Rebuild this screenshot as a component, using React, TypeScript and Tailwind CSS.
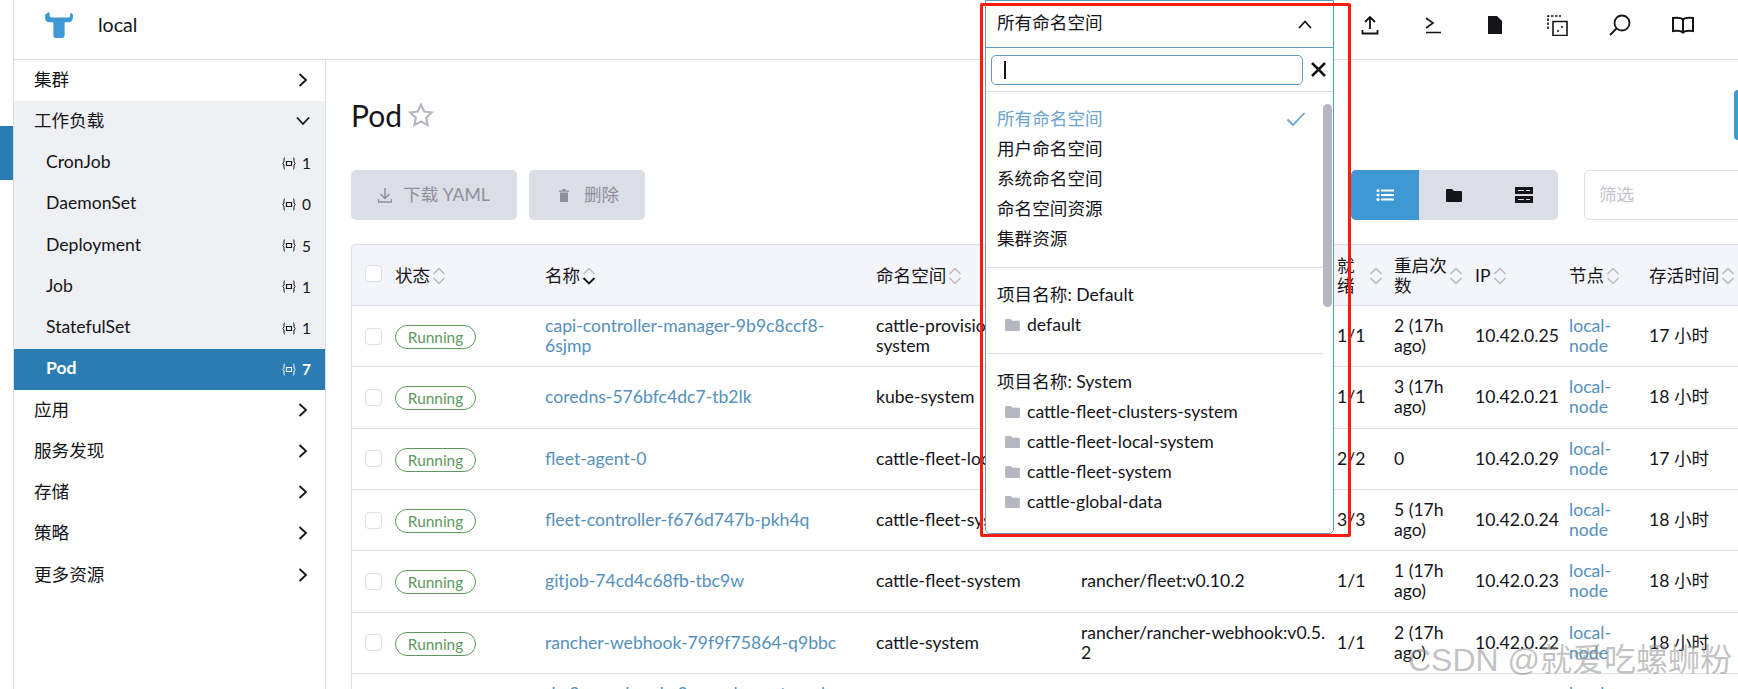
import React from "react";

const font = { fontFamily: '"Lato", "Noto Sans CJK SC", sans-serif' };

const Chevron = ({ down = false, up = false, className = "" }: { down?: boolean; up?: boolean; className?: string }) => (
  <svg width="14" height="14" viewBox="0 0 14 14" className={className} fill="none" stroke="#141419" strokeWidth="1.8">
    {down ? <path d="M1 3.500 7 10 13 3.500" /> : up ? <path d="M1 10 7 3.500 13 10" /> : <path d="M3.500 1 10 7 3.500 13" />}
  </svg>
);

const Sort = ({ active = false }: { active?: boolean }) => (
  <svg width="14" height="18" viewBox="0 0 14 18" fill="none" className="ml-[2px] shrink-0" strokeWidth="1.3">
    <path d="M1.500 7 7 1.500 12.500 7" stroke="#b6b6c2" />
    <path d="M1.500 11 7 16.500 12.500 11" stroke={active ? "#141419" : "#b6b6c2"} strokeWidth={active ? 1.8 : 1.3} />
  </svg>
);

const Braces = ({ light = false }: { light?: boolean }) => (
  <svg width="14" height="13" viewBox="0 0 14 13" fill="none" stroke={light ? "#ffffff" : "#141419"} strokeWidth="1" className="shrink-0">
    <path d="M3 1h-.5C2 1 2 1.500 2 2v3L.8 6.500 2 8v3c0 .5 0 1 .5 1H3" />
    <path d="M11 1h.5c.5 0 .5.5.5 1v3l1.200 1.500L12 8v3c0 .5 0 1-.5 1H11" />
    <path d="M4.500 4.500h5v4h-5z" strokeWidth="1.200" />
  </svg>
);

const Folder = () => (
  <svg width="15" height="12" viewBox="0 0 16 13" fill="#b6b6c2" className="shrink-0">
    <path d="M1 0h5l2 2h7a1 1 0 0 1 1 1v9a1 1 0 0 1-1 1H1a1 1 0 0 1-1-1V1a1 1 0 0 1 1-1z" />
  </svg>
);

const sideTop = ["集群"];
const sideBottom = ["应用", "服务发现", "存储", "策略", "更多资源"];
const workloads: [string, string][] = [["CronJob", "1"], ["DaemonSet", "0"], ["Deployment", "5"], ["Job", "1"], ["StatefulSet", "1"]];

const SideRow = ({ label }: { label: string }) => (
  <div className="flex h-[41.25px] items-center justify-between pb-[2px] pl-[20px] pr-[15px] text-[#141419]">
    <span>{label}</span>
    <Chevron />
  </div>
);

const rows = [
  ["capi-controller-manager-9b9c8ccf8-6sjmp", "cattle-provisioning-system", "", "1/1", "2 (17h ago)", "10.42.0.25", "17 小时"],
  ["coredns-576bfc4dc7-tb2lk", "kube-system", "", "1/1", "3 (17h ago)", "10.42.0.21", "18 小时"],
  ["fleet-agent-0", "cattle-fleet-local-system", "", "2/2", "0", "10.42.0.29", "17 小时"],
  ["fleet-controller-f676d747b-pkh4q", "cattle-fleet-system", "", "3/3", "5 (17h ago)", "10.42.0.24", "18 小时"],
  ["gitjob-74cd4c68fb-tbc9w", "cattle-fleet-system", "rancher/fleet:v0.10.2", "1/1", "1 (17h ago)", "10.42.0.23", "18 小时"],
  ["rancher-webhook-79f9f75864-q9bbc", "cattle-system", "rancher/rancher-webhook:v0.5.2", "1/1", "2 (17h ago)", "10.42.0.22", "18 小时"],
  ["rke2-coredns-rke2-coredns-autoscaler-abc12", "kube-system", "", "1/1", "0", "10.42.0.20", "18 小时"],
];

const Box = () => <span className="block h-[17px] w-[17px] rounded-[4px] border border-[#dcdee7] bg-white"></span>;

const Th = ({ children, active = false, textClass = "" }: { children: React.ReactNode; active?: boolean; textClass?: string }) => (
  <th className="border-y border-[#dcdee7] p-0 pt-[2px] text-left font-normal">
    <span className="flex items-center">
      <span className={`shrink-0 ${textClass}`}>{children}</span>
      <Sort active={active} />
    </span>
  </th>
);

export default function App() {
  return (
    <div style={font} className="relative flex h-[689px] w-[1738px] overflow-hidden bg-white text-[17.6px] leading-[20px] text-[#141419]">
      {/* far-left rail */}
      <div className="w-[14px] shrink-0 border-r border-[#dcdee7] pt-[126px]">
        <div className="h-[54px] w-[13px] bg-[#2a7cb2]"></div>
      </div>

      <div className="flex min-w-0 flex-1 flex-col">
        {/* header */}
        <header className="flex h-[60px] shrink-0 items-center border-b border-[#dcdee7] pb-[9px]">
          <svg width="32" height="28" viewBox="0 0 32 30" className="ml-[29px] shrink-0" fill="#3d98d3">
            <path d="M1 4c0 5 1 8 4 8h5v14c0 2 1 3 3 3h6c2 0 3-1 3-3V12h5c3 0 4-3 4-8l-2-2-1 1c0 3 0 4-2 4H8C6 7 6 6 6 3L5 1z" />
          </svg>
          <span className="ml-[23px] text-[19.600px] text-[#141419]">local</span>
          <div className="ml-auto flex items-center pr-[23.700px]">
            {[
              <svg key="a" width="18" height="20" viewBox="0 0 18 20" fill="none" stroke="#141419" strokeWidth="1.8"><path d="M9 14V2M4 7l5-5 5 5M1.500 15v3.500h15V15" /></svg>,
              <svg key="b" width="18" height="20" viewBox="0 0 18 20" fill="none" stroke="#141419" strokeWidth="1.6"><path d="M2 3l7 5-7 5M2 17.500h15" /></svg>,
              <svg key="c" width="16" height="20" viewBox="0 0 16 20" fill="#141419"><path d="M1 1h9l5 5v13H1z" /></svg>,
              <svg key="d" width="21" height="21" viewBox="0 0 21 21" fill="none" stroke="#141419" strokeWidth="1.6"><path d="M1 14V1h13" strokeDasharray="2.500 1.500" /><path d="M6 6.500h14v14H6z" /><path d="M10 16h3M15 11v3" strokeDasharray="2 1" /></svg>,
              <svg key="e" width="22" height="22" viewBox="0 0 22 22" fill="none" stroke="#141419" strokeWidth="1.8"><circle cx="13" cy="9" r="7.500" /><path d="M7.500 14.500 1 21" /></svg>,
              <svg key="f" width="24" height="18" viewBox="0 0 24 18" fill="none" stroke="#141419" strokeWidth="2"><path d="M12 3.500C10 1.500 6 1.500 2 2v13c4-.5 8-.5 10 1.500 2-2 6-2 10-1.500V2c-4-.5-8-.5-10 1.500zM12 3.500v13" /></svg>,
            ].map((icon, i) => (
              <span key={i} className="flex w-[62.600px] items-center justify-center">{icon}</span>
            ))}
          </div>
        </header>

        <div className="flex min-h-0 flex-1">
          {/* sidebar */}
          <aside className="w-[312px] shrink-0 border-r border-[#dcdee7]">
            {sideTop.map((l) => <SideRow key={l} label={l} />)}
            <div className="bg-[#eff0f4]">
              <div className="flex h-[41.25px] items-center justify-between pb-[2px] pl-[20px] pr-[15px]">
                <span>工作负载</span>
                <Chevron down />
              </div>
              {workloads.map(([n, c]) => (
                <div key={n} className="flex h-[41.25px] items-center justify-between pb-[2px] pl-[32px] pr-[14px]">
                  <span>{n}</span>
                  <span className="flex items-center gap-[6px] pt-[2px] text-[15.400px]"><Braces />{c}</span>
                </div>
              ))}
              <div className="flex h-[41.25px] items-center justify-between bg-[#2a7cb2] pb-[2px] pl-[32px] pr-[14px] font-bold text-white">
                <span>Pod</span>
                <span className="flex items-center gap-[6px] pt-[2px] text-[15.400px]"><Braces light />7</span>
              </div>
            </div>
            {sideBottom.map((l) => <SideRow key={l} label={l} />)}
          </aside>

          {/* main */}
          <main className="min-w-0 flex-1 overflow-hidden pl-[25px]">
            <div className="relative flex h-[110px] items-center">
              <h1 className="text-[30px] font-normal leading-[36px] text-[#141419]">Pod</h1>
              <svg width="26" height="26" viewBox="0 0 24 24" fill="none" stroke="#b6b6c2" strokeWidth="2" className="ml-[6px]">
                <path d="M12 2.500l3 6.300 6.800.9-5 4.800 1.300 6.800-6.100-3.300-6.100 3.300 1.300-6.800-5-4.800 6.800-.9z" />
              </svg>
              <span className="absolute right-0 top-[30px] h-[50px] w-[4px] rounded-l-[4px] bg-[#3d98d3]"></span>
            </div>

            <div className="flex h-[74px] items-start">
              <button className="flex h-[50px] w-[166px] shrink-0 items-center justify-center rounded-[5px] bg-[#dcdee7] text-[#8f8f9b]">
                <svg width="14" height="16" viewBox="0 0 14 16" fill="none" stroke="#8f8f9b" strokeWidth="1.500" className="mr-[11px]"><path d="M7 1v10M2.500 7 7 11.500 11.500 7M.5 12v3h13v-3" /></svg>
                下载 YAML
              </button>
              <button className="ml-[12px] flex h-[50px] w-[116px] shrink-0 items-center justify-center rounded-[5px] bg-[#dcdee7] pl-[4px] text-[#8f8f9b]">
                <svg width="10" height="13" viewBox="0 0 10 13" fill="#8f8f9b" className="mr-[15px]"><path d="M0 1.500h3.500V0h3v1.500H10v1.200H0zM1 3.500h8V13H1z" /></svg>
                删除
              </button>
              <div className="ml-[706px] flex h-[50px] w-[207px] shrink-0 overflow-hidden rounded-[5px] bg-[#dcdee7]">
                <span className="flex w-[68px] items-center justify-center bg-[#3d98d3]">
                  <svg width="18" height="14" viewBox="0 0 18 14" fill="#fff"><circle cx="2" cy="2.500" r="1.600" /><circle cx="2" cy="7" r="1.600" /><circle cx="2" cy="11.500" r="1.600" /><path d="M5 1.500h13v2H5zM5 6h13v2H5zM5 10.500h13v2H5z" /></svg>
                </span>
                <span className="flex w-[70px] items-center justify-center">
                  <svg width="16" height="13" viewBox="0 0 16 13" fill="#141419"><path d="M1 0h5l2 2h7a1 1 0 0 1 1 1v9a1 1 0 0 1-1 1H1a1 1 0 0 1-1-1V1a1 1 0 0 1 1-1z" /></svg>
                </span>
                <span className="flex w-[69px] items-center justify-center">
                  <svg width="18" height="16" viewBox="0 0 18 16" fill="#141419"><path d="M0 0h18v7H0zM0 9h18v7H0z" /><path d="M3 3.500h6M11 3.500h4M3 12.500h6M11 12.500h4" stroke="#dcdee7" strokeWidth="1" /></svg>
                </span>
              </div>
              <div className="ml-[26px] flex h-[50px] w-[170px] shrink-0 items-center rounded-[5px] border border-[#dcdee7] pl-[14px] text-[#c4c4ce]">筛选</div>
            </div>

            {/* table */}
            <table className="w-[1420px] table-fixed border-separate border-spacing-0">
              <colgroup>
                <col className="w-[44px]" /><col className="w-[150px]" /><col className="w-[331px]" /><col className="w-[205px]" /><col className="w-[256px]" /><col className="w-[57px]" /><col className="w-[81px]" /><col className="w-[94px]" /><col className="w-[80px]" /><col className="w-[122px]" />
              </colgroup>
              <thead>
                <tr className="h-[62px] bg-[#f4f5fa]">
                  <th className="rounded-tl-[5px] border-y border-l border-[#dcdee7] p-0 pb-[4px] pl-[13px] text-left"><Box /></th>
                  <Th>状态</Th>
                  <Th active>名称</Th>
                  <Th>命名空间</Th>
                  <Th>镜像</Th>
                  <Th textClass="w-[30px]">
                    <span className="block w-[18px]">就绪</span>
                  </Th>
                  <Th textClass="w-[53px]">重启次数</Th>
                  <Th>IP</Th>
                  <Th>节点</Th>
                  <Th>存活时间</Th>
                </tr>
              </thead>
              <tbody>
                {rows.map((r) => (
                  <tr key={r[0]} className="h-[61.330px]">
                    <td className="border-b border-l border-[#dcdee7] p-0 pl-[13px]"><Box /></td>
                    <td className="border-b border-[#dcdee7] p-0">
                      <span className="mt-[2px] inline-flex h-[24px] w-[81px] items-center justify-center rounded-[12px] border border-[#5d995d] align-middle text-[15.400px] text-[#5d995d]">Running</span>
                    </td>
                    <td className="border-b border-[#dcdee7] p-0 pr-[24px] text-[#5590bb]">{r[0]}</td>
                    <td className="border-b border-[#dcdee7] p-0 pr-[10px]">{r[1]}</td>
                    <td className="border-b border-[#dcdee7] p-0 pr-[10px] break-all">{r[2]}</td>
                    <td className="border-b border-[#dcdee7] p-0">{r[3]}</td>
                    <td className="border-b border-[#dcdee7] p-0 pr-[14px]">{r[4]}</td>
                    <td className="border-b border-[#dcdee7] p-0">{r[5]}</td>
                    <td className="border-b border-[#dcdee7] p-0 pr-[30px] text-[#5590bb]">local-node</td>
                    <td className="border-b border-[#dcdee7] p-0">{r[6]}</td>
                  </tr>
                ))}
              </tbody>
            </table>
          </main>
        </div>
      </div>

      {/* namespace dropdown */}
      <div className="absolute left-[985px] top-0 flex h-[534px] w-[349px] flex-col overflow-hidden rounded-b-[5px] border border-[#5d9cbf] bg-white">
        <div className="flex h-[47px] shrink-0 items-start justify-between border-b border-[#5d9cbf] pl-[11px] pr-[21px] pt-[12px]">
          <span>所有命名空间</span>
          <Chevron up className="mt-[5px]" />
        </div>
        <div className="flex h-[44px] shrink-0 items-center border-b border-[#dcdee7] pl-[5px]">
          <div className="flex h-[30px] w-[312px] items-center rounded-[5px] border border-[#5d9cbf] pl-[12px]">
            <span className="h-[18px] w-[2px] bg-[#141419]"></span>
          </div>
          <svg width="17" height="17" viewBox="0 0 17 17" stroke="#141419" strokeWidth="2.500" className="ml-[7px]"><path d="M2 2l13 13M15 2 2 15" /></svg>
        </div>
        <div className="relative min-h-0 flex-1">
          <span className="absolute right-[1px] top-[12px] h-[203px] w-[9px] rounded-[5px] bg-[#b6b6c2]"></span>
          <div className="mr-[10px]">
            <div className="border-b border-[#dcdee7] pb-[13px] pl-[11px] pt-[12px]">
              <div className="flex h-[30px] items-center justify-between pr-[17px] text-[#6ba3cc]">
                <span>所有命名空间</span>
                <svg width="20" height="16" viewBox="0 0 20 16" fill="none" stroke="#6ba3cc" strokeWidth="1.800"><path d="M1.500 8.500 7 14 18.500 2" /></svg>
              </div>
              {["用户命名空间", "系统命名空间", "命名空间资源", "集群资源"].map((t) => (
                <div key={t} className="flex h-[30px] items-center">{t}</div>
              ))}
            </div>
            <div className="border-b border-[#dcdee7] pb-[13px] pl-[11px] pt-[12px]">
              <div className="flex h-[30px] items-center">项目名称: Default</div>
              <div className="flex h-[30px] items-center gap-[7px] pl-[8px]"><Folder />default</div>
            </div>
            <div className="pl-[11px] pt-[13px]">
              <div className="flex h-[30px] items-center">项目名称: System</div>
              {["cattle-fleet-clusters-system", "cattle-fleet-local-system", "cattle-fleet-system", "cattle-global-data"].map((t) => (
                <div key={t} className="flex h-[30px] items-center gap-[7px] pl-[8px]"><Folder />{t}</div>
              ))}
            </div>
          </div>
        </div>
      </div>

      {/* red annotation */}
      <div className="pointer-events-none absolute left-[980px] top-[3px] h-[534px] w-[371px] rounded-[2px] border-[3px] border-[#fb1c10]"></div>

      {/* watermark */}
      <div style={{ fontFamily: '"Liberation Sans", "Noto Sans CJK SC", sans-serif' }} className="pointer-events-none absolute left-[1408px] top-[640px] whitespace-nowrap text-[32px] leading-[40px] text-[#8f8f8f]/55">CSDN @就爱吃螺蛳粉</div>
    </div>
  );
}
